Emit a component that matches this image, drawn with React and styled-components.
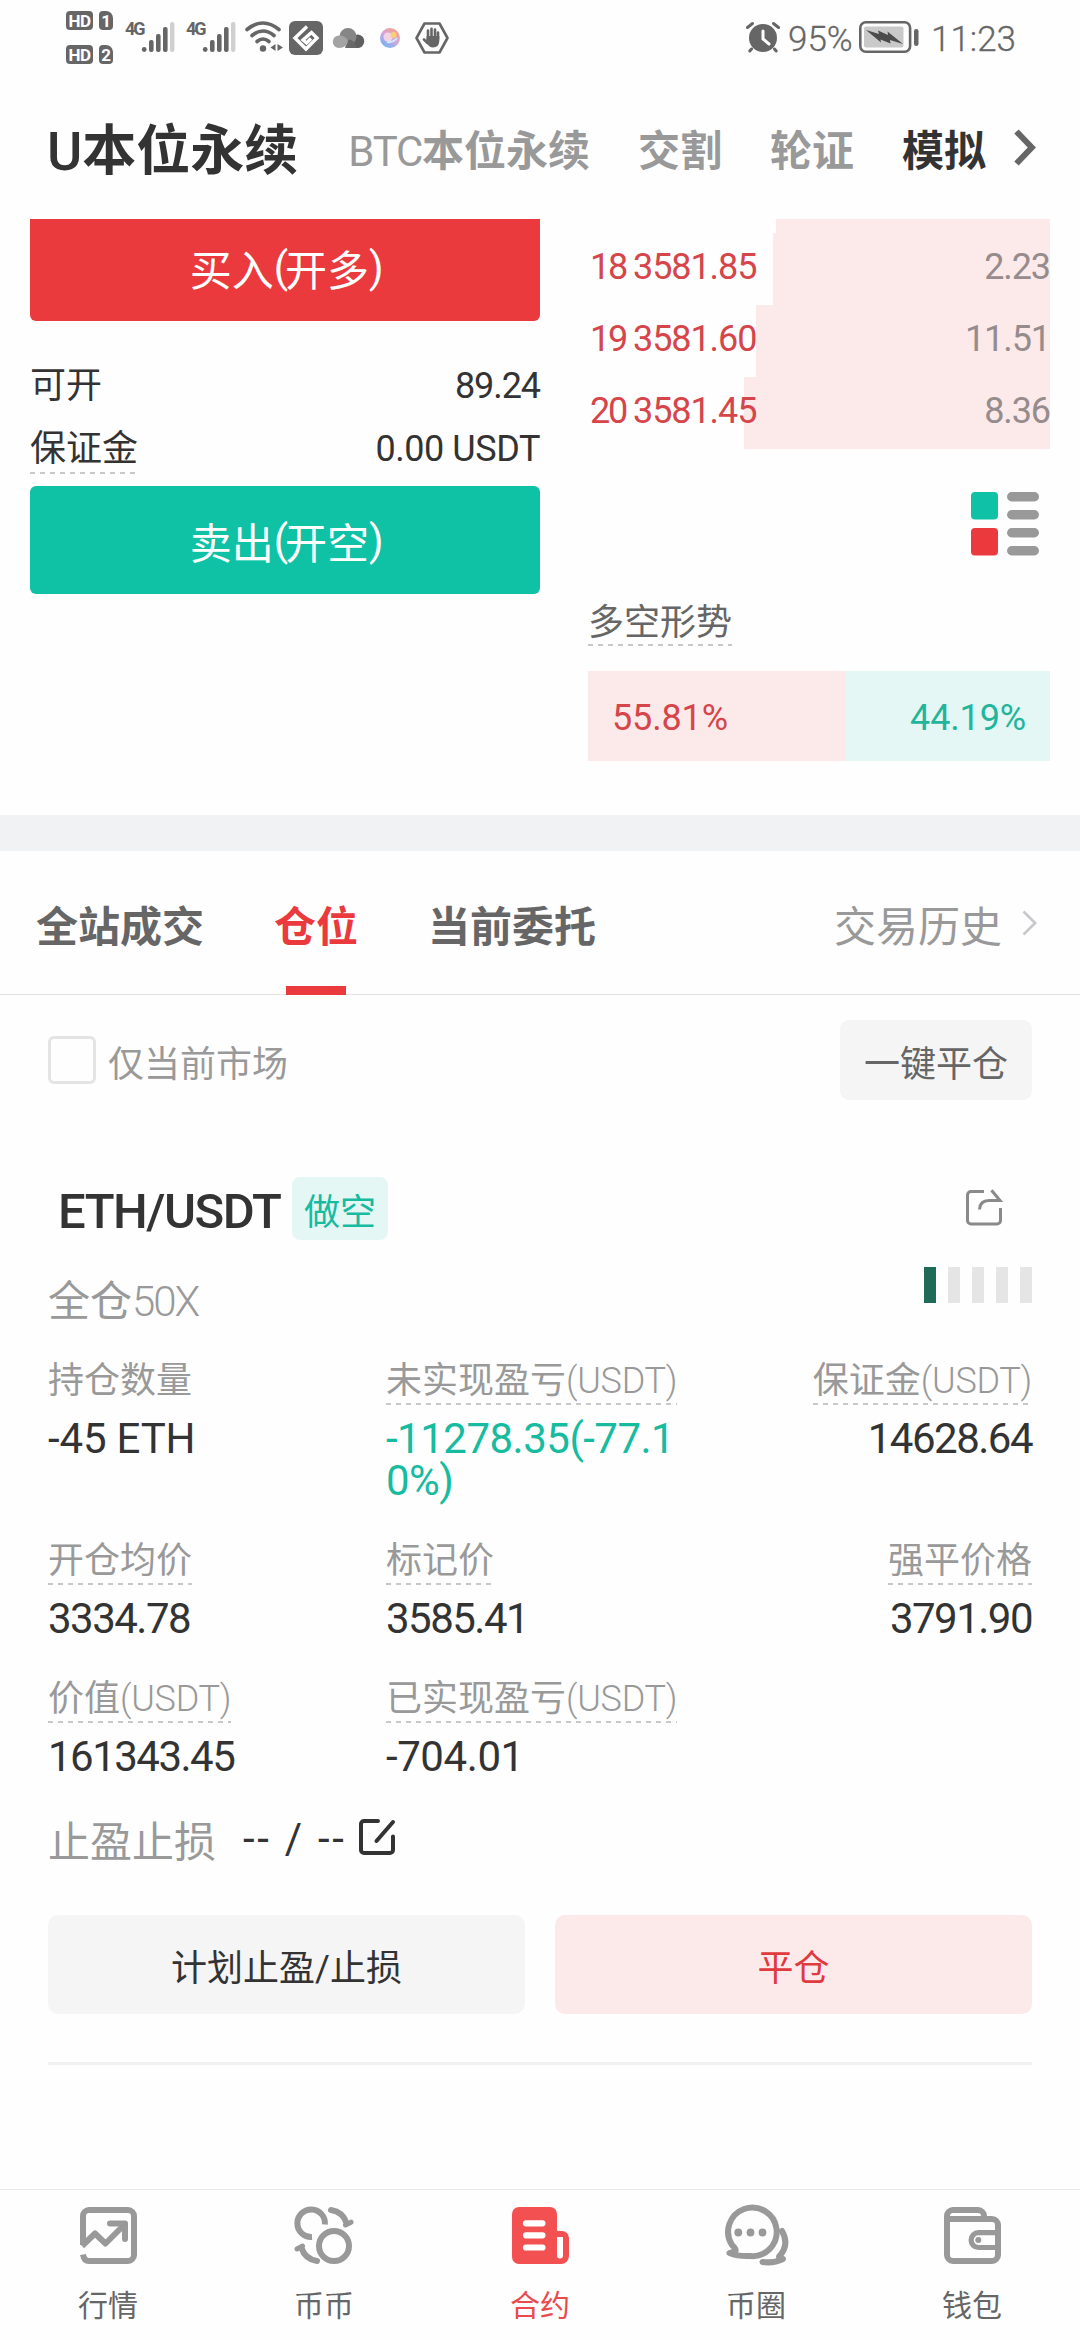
import React from "react";
import styled, { createGlobalStyle } from "styled-components";

const red = "#ea3a3d";
const green = "#10c2a5";

const GlobalStyle = createGlobalStyle`
  * {
    box-sizing: border-box;
  }
  body {
    margin: 0;
    background-color: #fefefe;
    color: #333;
    font-family: Roboto, "Noto Sans CJK SC", sans-serif;
    -webkit-font-smoothing: antialiased;
  }
`;

const Container = styled.div`
  width: 1080px;
  height: 2340px;
  overflow: hidden;
  display: flex;
  flex-direction: column;
`;

const Icon = styled.svg`
  display: block;
  flex: none;
  overflow: visible;
`;

const Num = styled.span`
  letter-spacing: ${(props) => props.$ls || "-0.03em"};
  font-weight: ${(props) => props.$weight || 400};
`;

/* status bar */

const StatusBar = styled.div`
  height: 78px;
  flex: none;
  display: flex;
  justify-content: space-between;
  padding: 0 67px 0 66px;
  color: #666;
`;
const StatusGroup = styled.div`
  display: flex;
  align-items: flex-start;
`;
const SimColumn = styled.div`
  display: flex;
  flex-direction: column;
  gap: 15px;
  padding-top: 11px;
  margin-right: 12px;
`;
const SimRow = styled.div`
  display: flex;
  gap: 6px;
`;
const SimBadge = styled.span`
  width: ${(props) => props.$w}px;
  height: 19px;
  border-radius: 4px;
  background-color: #666;
  color: white;
  font-size: 17px;
  font-weight: 700;
  line-height: 20px;
  text-align: center;
  letter-spacing: -0.5px;
  ${(props) => props.$card && "border-top-right-radius: 7px;"}
`;
const Signal = styled.div`
  display: flex;
  width: 61px;
  padding-top: 22px;
`;
const SignalText = styled.span`
  width: 17px;
  font-size: 18px;
  font-weight: 700;
  line-height: 14px;
  letter-spacing: -2px;
`;
const StatusIcon = styled.div`
  margin-left: ${(props) => props.$ml || 0}px;
  margin-top: ${(props) => props.$mt || 0}px;
`;
const StatusText = styled.span`
  font-size: 35px;
  line-height: 40px;
  margin-top: 20px;
  margin-left: ${(props) => props.$ml}px;
  width: ${(props) => props.$w}px;
  font-weight: 300;
  -webkit-text-stroke: 0.3px currentColor;
  white-space: nowrap;
`;

/* market header */

const Header = styled.div`
  height: 141px;
  flex: none;
  display: flex;
  align-items: center;
  padding: 6px 46px 0 47px;
  gap: 48px;
  line-height: 60px;
`;
const MarketTab = styled.span`
  font-size: ${(props) => (props.$active ? 54 : 42)}px;
  padding-right: ${(props) => (props.$active ? 2 : 0)}px;
  color: ${(props) => (props.$active || props.$dark ? "#333" : "#999")};
  font-weight: 700;
  white-space: nowrap;
`;
const HeaderArrow = styled.div`
  margin-left: -19px;
  margin-top: -8px;
`;

/* trade panel */

const TradePanel = styled.div`
  height: 596px;
  flex: none;
  display: flex;
  gap: 48px;
  padding: 0 30px;
`;
const OrderForm = styled.div`
  width: 510px;
`;
const TradeButton = styled.div`
  height: ${(props) => (props.$clipped ? 102 : 108)}px;
  padding-bottom: ${(props) => (props.$clipped ? 6 : 0)}px;
  border-radius: ${(props) => (props.$clipped ? "0 0 6px 6px" : "6px")};
  background-color: ${(props) => props.$color};
  color: white;
  font-size: 42px;
  display: flex;
  align-items: center;
  justify-content: center;
`;
const InfoRow = styled.div`
  display: flex;
  justify-content: space-between;
  height: ${(props) => props.$h}px;
  margin: ${(props) => props.$m};
  font-size: 36px;
  line-height: 39px;
`;
const Dashed = styled.span`
  display: inline-block;
  white-space: nowrap;
  height: 44px;
  color: ${(props) => props.$color || "inherit"};
  background: repeating-linear-gradient(to right, #c8c8c8 0 5px, transparent 5px 10px)
    left bottom / 100% 2px no-repeat;
`;
const DepthColumn = styled.div`
  width: 462px;
  font-size: 36px;
`;
const DepthRow = styled.div`
  display: flex;
  height: ${(props) => props.$h || 72}px;
  line-height: 68px;
  color: #968b8d;
  background: linear-gradient(#fceaea, #fceaea) right / ${(props) => props.$depth}px 100% no-repeat;
`;
const DepthIndex = styled.span`
  width: 45px;
  padding-left: 2px;
  color: #d5454a;
`;
const DepthPrice = styled.span`
  color: #d5454a;
`;
const DepthAmount = styled.span`
  margin-left: auto;
`;
const DepthSwitch = styled.div`
  display: flex;
  justify-content: flex-end;
  padding: 43px 11px 0 0;
`;
const TrendTitle = styled.div`
  margin-top: 46px;
  line-height: 42px;
  height: 44px;
`;
const TrendBar = styled.div`
  display: flex;
  margin-top: 25px;
  height: 90px;
  line-height: 95px;
`;
const TrendPart = styled.div`
  width: ${(props) => props.$share}%;
  padding: 0 24px;
  color: ${(props) => props.$color};
  background-color: ${(props) => props.$bg};
  text-align: ${(props) => props.$align};
`;
const Divider = styled.div`
  height: 36px;
  flex: none;
  background-color: #f0f2f4;
`;

/* position tabs */

const Tabs = styled.div`
  height: 144px;
  flex: none;
  display: flex;
  gap: 70px;
  padding: 0 43px 0 36px;
  border-bottom: 1px solid #e2e2e2;
  font-size: 42px;
  line-height: 154px;
`;
const Tab = styled.div`
  position: relative;
  font-weight: 700;
  color: ${(props) => (props.$active ? red : "#666")};
`;
const TabLine = styled.div`
  position: absolute;
  left: 12px;
  bottom: -1px;
  width: 60px;
  height: 9px;
  background-color: ${red};
`;
const History = styled.div`
  margin-left: auto;
  display: flex;
  gap: 20px;
  color: #999;
`;
const HistoryArrow = styled.div`
  padding-top: 59px;
`;

/* position list */

const Filter = styled.div`
  display: flex;
  align-items: center;
  height: 80px;
  flex: none;
  margin: 25px 48px 0;
  font-size: 36px;
  color: #999;
`;
const Checkbox = styled.div`
  width: 48px;
  height: 48px;
  margin-right: 12px;
  border: 3px solid #e4e4e4;
  border-radius: 6px;
`;
const FilterText = styled.span`
  padding-top: 2px;
`;
const CloseAll = styled.div`
  margin-left: auto;
  width: 192px;
  height: 80px;
  padding-top: 8px;
  line-height: 74px;
  text-align: center;
  border-radius: 9px;
  background-color: #f5f5f5;
  color: #666;
`;
const Position = styled.div`
  margin: 77px 48px 0;
`;
const PositionHead = styled.div`
  display: flex;
  align-items: center;
  height: 63px;
  padding: 0 29px 0 10px;
`;
const Pair = styled.span`
  width: 234px;
  font-size: 49px;
  font-weight: 500;
  line-height: 63px;
  padding-top: 5px;
  letter-spacing: -1.5px;
  white-space: nowrap;
`;
const Side = styled.span`
  width: 96px;
  height: 63px;
  padding-top: 6px;
  line-height: 61px;
  text-align: center;
  font-size: 36px;
  border-radius: 8px;
  color: #17bb9f;
  background-color: #e5f7f5;
`;
const Share = styled.div`
  margin-left: auto;
  margin-top: -3px;
`;
const LeverageRow = styled.div`
  display: flex;
  justify-content: space-between;
  margin-top: 27px;
  height: 84px;
  font-size: 42px;
  line-height: 69px;
  color: #999;
`;
const Risk = styled.div`
  display: flex;
  gap: 12px;
`;
const RiskBar = styled.div`
  width: 12px;
  height: 36px;
  background-color: ${(props) => (props.$on ? "#206a58" : "#e5e5e5")};
`;
const Stats = styled.div`
  display: grid;
  grid-template-columns: 338px 292px 1fr;
  grid-auto-rows: 138px;
  grid-template-rows: 180px;
  margin-top: 10px;
`;
const Stat = styled.div`
  display: flex;
  flex-direction: column;
  align-items: ${(props) => (props.$right ? "flex-end" : "flex-start")};
`;
const StatLabel = styled.span`
  height: 44px;
  font-size: 36px;
  line-height: 40px;
  color: #999;
  white-space: nowrap;
`;
const StatValue = styled.span`
  margin-top: 13px;
  font-size: 42px;
  line-height: 42px;
  letter-spacing: ${(props) => props.$ls || "-0.036em"};
  word-break: break-all;
  color: ${(props) => props.$color || "#333"};
`;
const StopRow = styled.div`
  display: flex;
  align-items: center;
  height: 58px;
  margin-top: -8px;
  font-size: 42px;
  color: #999;
`;
const StopValue = styled.span`
  margin-left: 27px;
  width: 116px;
  color: #333;
  letter-spacing: 2.7px;
  white-space: nowrap;
`;
const StopEdit = styled.div`
  margin-top: -2px;
`;
const Actions = styled.div`
  display: grid;
  grid-template-columns: 1fr 1fr;
  gap: 30px;
  margin-top: 48px;
`;
const Action = styled.div`
  height: 99px;
  padding-top: 4px;
  line-height: 100px;
  text-align: center;
  font-size: 36px;
  border-radius: 10px;
  color: ${(props) => (props.$danger ? "#e0393e" : "#333")};
  background-color: ${(props) => (props.$danger ? "#fce9ea" : "#f5f5f5")};
`;
const EndLine = styled.div`
  height: 3px;
  margin-top: 48px;
  background-color: #f1f1f1;
`;

/* bottom navigation */

const BottomNav = styled.div`
  margin-top: auto;
  height: 151px;
  flex: none;
  display: flex;
  border-top: 1px solid #e8e8e8;
`;
const NavItem = styled.div`
  flex: 1;
  display: flex;
  flex-direction: column;
  align-items: center;
  padding-top: 17px;
  font-size: 30px;
  line-height: 36px;
  color: ${(props) => (props.$active ? "#ea4a4e" : "#666")};
`;
const NavLabel = styled.span`
  margin-top: 24px;
`;

const SignalBars = () => (
  <Icon width="33" height="30" viewBox="0 0 33 30" fill="#666">
    <circle cx="2.2" cy="27.5" r="2.4" />
    <rect x="7" y="18" width="4.6" height="12" rx="2" />
    <rect x="14" y="12" width="4.6" height="18" rx="2" />
    <rect x="21" y="5" width="4.6" height="25" rx="2" />
    <rect x="28" y="0" width="4.4" height="30" rx="2" fill="#d0d0d0" />
  </Icon>
);

const WifiIcon = () => (
  <Icon width="38" height="31" viewBox="0 0 38 31" fill="none" stroke="#666" strokeWidth="3.6" strokeLinecap="round">
    <path d="M2 8.5Q18 -4.5 34 8.5" />
    <path d="M7 14.5Q18 5.5 29 14.5" />
    <path d="M12 20.5Q18 15.5 24 20.5" />
    <circle cx="18" cy="27.5" r="3.2" fill="#666" stroke="none" />
    <path d="M30.5 23V30L25.5 26.5ZM32.5 23V30L38 26.5Z" fill="#666" stroke="none" />
  </Icon>
);

const DiamondIcon = () => (
  <Icon width="34" height="34" viewBox="0 0 34 34">
    <rect width="34" height="34" rx="6" fill="#666" />
    <path
      d="M18 5.5L6 17L17 28L28 17L22.5 11.5L14 19L17.5 22L22 17.5"
      fill="none"
      stroke="white"
      strokeWidth="3.4"
    />
  </Icon>
);

const CloudIcon = () => (
  <Icon width="30" height="20" viewBox="0 0 30 20">
    <path d="M14 20H24a6 6 0 0 0 1-13.5Q18 6 14 20Z" fill="#5f5f5f" />
    <circle cx="15" cy="8.5" r="8.5" fill="#868686" />
    <path d="M12 20H24Q20 10 15 12Z" fill="#686868" />
    <path d="M6 20a6 6 0 0 1 0-12.5Q13 7.5 15 13Q14 20 6 20Z" fill="#a3a3a3" />
  </Icon>
);

const BallIcon = () => (
  <Icon width="20" height="20" viewBox="0 0 20 20">
    <defs>
      <linearGradient id="ball" x1="0.9" y1="0.1" x2="0.3" y2="1">
        <stop offset="0" stopColor="#f6a183" />
        <stop offset="0.5" stopColor="#d7a5dc" />
        <stop offset="1" stopColor="#6fb2f2" />
      </linearGradient>
    </defs>
    <circle cx="10" cy="10" r="10" fill="url(#ball)" />
    <circle cx="8" cy="9" r="4.5" fill="#f3d3ea" />
    <circle cx="13.5" cy="7" r="3" fill="#f9cf72" />
    <path d="M7 14Q13 15 17 10" stroke="#c9ecff" strokeWidth="2" fill="none" />
  </Icon>
);

const HandIcon = () => (
  <Icon width="34" height="32" viewBox="0 0 34 32">
    <path
      d="M9.5 1.5H24.5L32.5 16L24.5 30.5H9.5L1.5 16Z"
      fill="none"
      stroke="#666"
      strokeWidth="2.6"
      strokeLinejoin="round"
    />
    <path
      d="M13 17V8.5M16.5 16V6.8M20 16V7.5M23 17V10.5M9 17.5L12.5 21"
      stroke="#666"
      strokeWidth="2.6"
      strokeLinecap="round"
    />
    <path d="M11.7 14H24.3V19Q24 25.5 18 25.5Q14 25.5 11 20Z" fill="#666" />
  </Icon>
);

const AlarmIcon = () => (
  <Icon width="34" height="31" viewBox="0 0 34 31" stroke="#666" fill="none" strokeLinecap="round">
    <circle cx="17" cy="16" r="14" fill="#666" stroke="none" />
    <path d="M1.5 5.5L6.5 1.5M32.5 5.5L27.5 1.5" strokeWidth="3" />
    <path d="M5.5 27L3.8 29M28.5 27L30.2 29" strokeWidth="3" />
    <path d="M17 9V17L23 22" stroke="white" strokeWidth="3" />
  </Icon>
);

const BatteryIcon = () => (
  <Icon width="60" height="32" viewBox="0 0 60 32">
    <rect x="1.3" y="1.3" width="49.8" height="29.4" rx="5.5" fill="none" stroke="#666" strokeWidth="2.6" />
    <rect x="5" y="5.5" width="39.5" height="21" rx="2" fill="#c9c9c9" />
    <path d="M7 9L20 13L19 9.5L29 14L28.5 10.5L44 23L31 19L31.5 22.5L21.5 18.5L22 21.5Z" fill="#4c4c4c" />
    <rect x="55" y="8" width="4.5" height="17" rx="2.2" fill="#666" />
  </Icon>
);

const DepthIcon = () => (
  <Icon width="68" height="64" viewBox="0 0 68 64">
    <rect x="0" y="0" width="27" height="27.5" rx="4" fill={green} />
    <rect x="0" y="36" width="27" height="27.5" rx="4" fill={red} />
    {[0, 18, 36, 54].map((y) => (
      <rect key={y} x="36" y={y} width="32" height="9.5" rx="4.7" fill="#999" />
    ))}
  </Icon>
);

const ShareIcon = () => (
  <Icon width="37" height="37" viewBox="0 0 37 37" fill="none" stroke="#8a8a8a" strokeWidth="3">
    <path d="M18 2.5H5a3.5 3.5 0 0 0-3.5 3.5V31.5a3.5 3.5 0 0 0 3.5 3.5H31a3.5 3.5 0 0 0 3.5-3.5V19" />
    <path d="M13.5 20.5Q14 11.5 23 11.5H34L25.5 1.2" />
  </Icon>
);

const EditIcon = () => (
  <Icon width="36" height="36" viewBox="0 0 36 36" fill="none" stroke="#333" strokeWidth="4" strokeLinecap="round">
    <path d="M19 2H5a3 3 0 0 0-3 3V31a3 3 0 0 0 3 3H31a3 3 0 0 0 3-3V17.5" />
    <path d="M34 3L17.5 22" />
  </Icon>
);

const Chevron = ({ w, h, stroke, strokeWidth }) => (
  <Icon width={w} height={h} viewBox={`0 0 ${w} ${h}`} fill="none" stroke={stroke} strokeWidth={strokeWidth}>
    <path d={`M1.5 1.5L${w - strokeWidth * 0.7} ${h / 2}L1.5 ${h - 1.5}`} />
  </Icon>
);

const QuotesIcon = () => (
  <Icon width="57" height="57" viewBox="0 0 57 57" fill="none" stroke="#999" strokeWidth="6">
    <path d="M3 38V9a6 6 0 0 1 6-6H48a6 6 0 0 1 6 6V48a6 6 0 0 1-6 6H9Q4 54 3 47.5" />
    <path d="M2 39L15 26.5L25.5 36.5L45 17" strokeLinejoin="round" />
    <path d="M30 16.5H45V32" strokeLinecap="round" strokeLinejoin="round" />
  </Icon>
);

const CoinsIcon = () => (
  <Icon width="60" height="57" viewBox="0 0 60 57" fill="none" stroke="#999" strokeWidth="6">
    <circle cx="40" cy="39" r="15" />
    <path d="M30.9 17.5A13.8 13.8 0 1 0 18 30" />
    <path d="M37 3Q49 5 52.5 16" strokeLinecap="round" />
    <path d="M51.5 18L57 15.2" strokeLinecap="round" strokeWidth="5" />
    <path d="M23 54Q11 52 7.5 41" strokeLinecap="round" />
    <path d="M8.5 39L3 42" strokeLinecap="round" strokeWidth="5" />
  </Icon>
);

const ContractIcon = () => (
  <Icon width="57" height="57" viewBox="0 0 57 57" fill="#f25051">
    <path d="M7 0H38a7 7 0 0 1 7 7V24H50a7 7 0 0 1 7 7V49a8 8 0 0 1-8 8H7a7 7 0 0 1-7-7V7a7 7 0 0 1 7-7Z" />
    <path d="M14 16.3H30.5M14 28.3H30.5M14 40.5H30.5" stroke="white" strokeWidth="6.2" strokeLinecap="round" />
    <path d="M45 30H51V48.5a3 3 0 0 1-6 0Z" fill="white" />
  </Icon>
);

const CircleIcon = () => (
  <Icon
    width="66"
    height="57"
    viewBox="0 2 66 57"
    fill="none"
    stroke="#999"
    strokeWidth="6"
    strokeLinecap="round"
    strokeLinejoin="round"
  >
    <path d="M12.5 46Q13.5 44 9 40A24.3 24.3 0 1 1 27 51Q15 51.5 6.5 48Z" />
    <g fill="#999" stroke="none">
      <circle cx="15.3" cy="27.5" r="3.9" />
      <circle cx="27.5" cy="27.5" r="3.9" />
      <circle cx="39.5" cy="27.5" r="3.9" />
    </g>
    <path d="M59 26Q67 40 56 51.5Q56 53.5 60 54Q51 58.5 39.5 57" />
  </Icon>
);

const WalletIcon = () => (
  <Icon width="57" height="57" viewBox="0 0 57 57" fill="none" stroke="#999" strokeWidth="6">
    <path d="M3 14V9a6 6 0 0 1 6-6H34a6 6 0 0 1 6 6V12" />
    <path d="M3 12H48a6 6 0 0 1 6 6V48a6 6 0 0 1-6 6H9a6 6 0 0 1-6-6Z" />
    <path d="M54 25.7H34.5a7.2 7.2 0 0 0 0 14.8H54" strokeWidth="5.2" />
    <circle cx="34.3" cy="33" r="3" fill="#999" stroke="none" />
  </Icon>
);

const asks = [
  { index: 18, price: "3581.85", amount: "2.23", depth: 277 },
  { index: 19, price: "3581.60", amount: "11.51", depth: 294 },
  { index: 20, price: "3581.45", amount: "8.36", depth: 306 },
];

const stats = [
  { label: "持仓数量", value: "-45 ETH", plain: true, ls: "-0.004em" },
  { label: "未实现盈亏", unit: "(USDT)", value: "-11278.35(-77.10%)", color: "#17bb9f", ls: "-0.012em" },
  { label: "保证金", unit: "(USDT)", value: "14628.64", right: true },
  { label: "开仓均价", value: "3334.78" },
  { label: "标记价", value: "3585.41" },
  { label: "强平价格", value: "3791.90", right: true },
  { label: "价值", unit: "(USDT)", value: "161343.45" },
  { label: "已实现盈亏", unit: "(USDT)", value: "-704.01", ls: "-0.01em" },
];

const navItems = [
  { label: "行情", icon: <QuotesIcon /> },
  { label: "币币", icon: <CoinsIcon /> },
  { label: "合约", icon: <ContractIcon />, active: true },
  { label: "币圈", icon: <CircleIcon /> },
  { label: "钱包", icon: <WalletIcon /> },
];

const StatItem = ({ item }) => {
  const text = (
    <>
      {item.label}
      {item.unit && (
        <Num $ls="-0.008em" $weight={300}>
          {item.unit}
        </Num>
      )}
    </>
  );
  return (
    <Stat $right={item.right}>
      <StatLabel>{item.plain ? text : <Dashed>{text}</Dashed>}</StatLabel>
      <StatValue $color={item.color} $ls={item.ls}>
        {item.value}
      </StatValue>
    </Stat>
  );
};

const App = () => {
  return (
    <Container>
      <GlobalStyle />
      <StatusBar>
        <StatusGroup>
          <SimColumn>
            {[1, 2].map((n) => (
              <SimRow key={n}>
                <SimBadge $w={27}>HD</SimBadge>
                <SimBadge $w={14} $card>
                  {n}
                </SimBadge>
              </SimRow>
            ))}
          </SimColumn>
          {[1, 2].map((n) => (
            <Signal key={n}>
              <SignalText>4G</SignalText>
              <SignalBars />
            </Signal>
          ))}
          <StatusIcon $ml={-2} $mt={21}>
            <WifiIcon />
          </StatusIcon>
          <StatusIcon $ml={6} $mt={21}>
            <DiamondIcon />
          </StatusIcon>
          <StatusIcon $ml={10} $mt={28}>
            <CloudIcon />
          </StatusIcon>
          <StatusIcon $ml={17} $mt={28}>
            <BallIcon />
          </StatusIcon>
          <StatusIcon $ml={15} $mt={22}>
            <HandIcon />
          </StatusIcon>
        </StatusGroup>
        <StatusGroup>
          <StatusIcon $mt={22}>
            <AlarmIcon />
          </StatusIcon>
          <StatusText $ml={8} $w={71}>
            95%
          </StatusText>
          <StatusIcon $mt={21}>
            <BatteryIcon />
          </StatusIcon>
          <StatusText $ml={12} $w={82}>
            11:23
          </StatusText>
        </StatusGroup>
      </StatusBar>

      <Header>
        <MarketTab $active>
          <Num $weight={500} $ls="0">
            U
          </Num>
          本位永续
        </MarketTab>
        <MarketTab>
          <Num>BTC</Num>本位永续
        </MarketTab>
        <MarketTab>交割</MarketTab>
        <MarketTab>轮证</MarketTab>
        <MarketTab $dark>模拟</MarketTab>
        <HeaderArrow>
          <Chevron w={21} h={35} stroke="#666" strokeWidth={6} />
        </HeaderArrow>
      </Header>

      <TradePanel>
        <OrderForm>
          <TradeButton $color={red} $clipped>
            买入<Num $ls="-0.08em">(</Num>开多<Num $ls="-0.08em">)</Num>
          </TradeButton>
          <InfoRow $h={36} $m="46px 0 27px">
            <span>可开</span>
            <Num>89.24</Num>
          </InfoRow>
          <InfoRow $h={44} $m="0 0 12px">
            <Dashed>保证金</Dashed>
            <Num $ls="-0.012em">0.00 USDT</Num>
          </InfoRow>
          <TradeButton $color={green}>
            卖出<Num $ls="-0.08em">(</Num>开空<Num $ls="-0.08em">)</Num>
          </TradeButton>
        </OrderForm>
        <DepthColumn>
          <DepthRow $h={14} $depth={274} />
          {asks.map((ask) => (
            <DepthRow key={ask.index} $depth={ask.depth}>
              <DepthIndex>
                <Num $ls="-0.06em">{ask.index}</Num>
              </DepthIndex>
              <DepthPrice>
                <Num>{ask.price}</Num>
              </DepthPrice>
              <DepthAmount>
                <Num>{ask.amount}</Num>
              </DepthAmount>
            </DepthRow>
          ))}
          <DepthSwitch>
            <DepthIcon />
          </DepthSwitch>
          <TrendTitle>
            <Dashed $color="#666">多空形势</Dashed>
          </TrendTitle>
          <TrendBar>
            <TrendPart $share={55.81} $color="#d5454a" $bg="#fceaea" $align="left">
              <Num $ls="-0.004em">55.81%</Num>
            </TrendPart>
            <TrendPart $share={44.19} $color="#22b59b" $bg="#e5f7f4" $align="right">
              <Num $ls="-0.004em">44.19%</Num>
            </TrendPart>
          </TrendBar>
        </DepthColumn>
      </TradePanel>

      <Divider />

      <Tabs>
        <Tab>全站成交</Tab>
        <Tab $active>
          仓位
          <TabLine />
        </Tab>
        <Tab>当前委托</Tab>
        <History>
          交易历史
          <HistoryArrow>
            <Chevron w={15} h={26} stroke="#c8c8cc" strokeWidth={2.6} />
          </HistoryArrow>
        </History>
      </Tabs>

      <Filter>
        <Checkbox />
        <FilterText>仅当前市场</FilterText>
        <CloseAll>一键平仓</CloseAll>
      </Filter>

      <Position>
        <PositionHead>
          <Pair>ETH/USDT</Pair>
          <Side>做空</Side>
          <Share>
            <ShareIcon />
          </Share>
        </PositionHead>
        <LeverageRow>
          <span>
            全仓
            <Num $ls="-0.05em" $weight={300}>
              50X
            </Num>
          </span>
          <Risk>
            {[true, false, false, false, false].map((on, i) => (
              <RiskBar key={i} $on={on} />
            ))}
          </Risk>
        </LeverageRow>
        <Stats>
          {stats.map((item) => (
            <StatItem key={item.label} item={item} />
          ))}
        </Stats>
        <StopRow>
          止盈止损
          <StopValue>-- / --</StopValue>
          <StopEdit>
            <EditIcon />
          </StopEdit>
        </StopRow>
        <Actions>
          <Action>计划止盈/止损</Action>
          <Action $danger>平仓</Action>
        </Actions>
        <EndLine />
      </Position>

      <BottomNav>
        {navItems.map((item) => (
          <NavItem key={item.label} $active={item.active}>
            {item.icon}
            <NavLabel>{item.label}</NavLabel>
          </NavItem>
        ))}
      </BottomNav>
    </Container>
  );
};

export default App;
